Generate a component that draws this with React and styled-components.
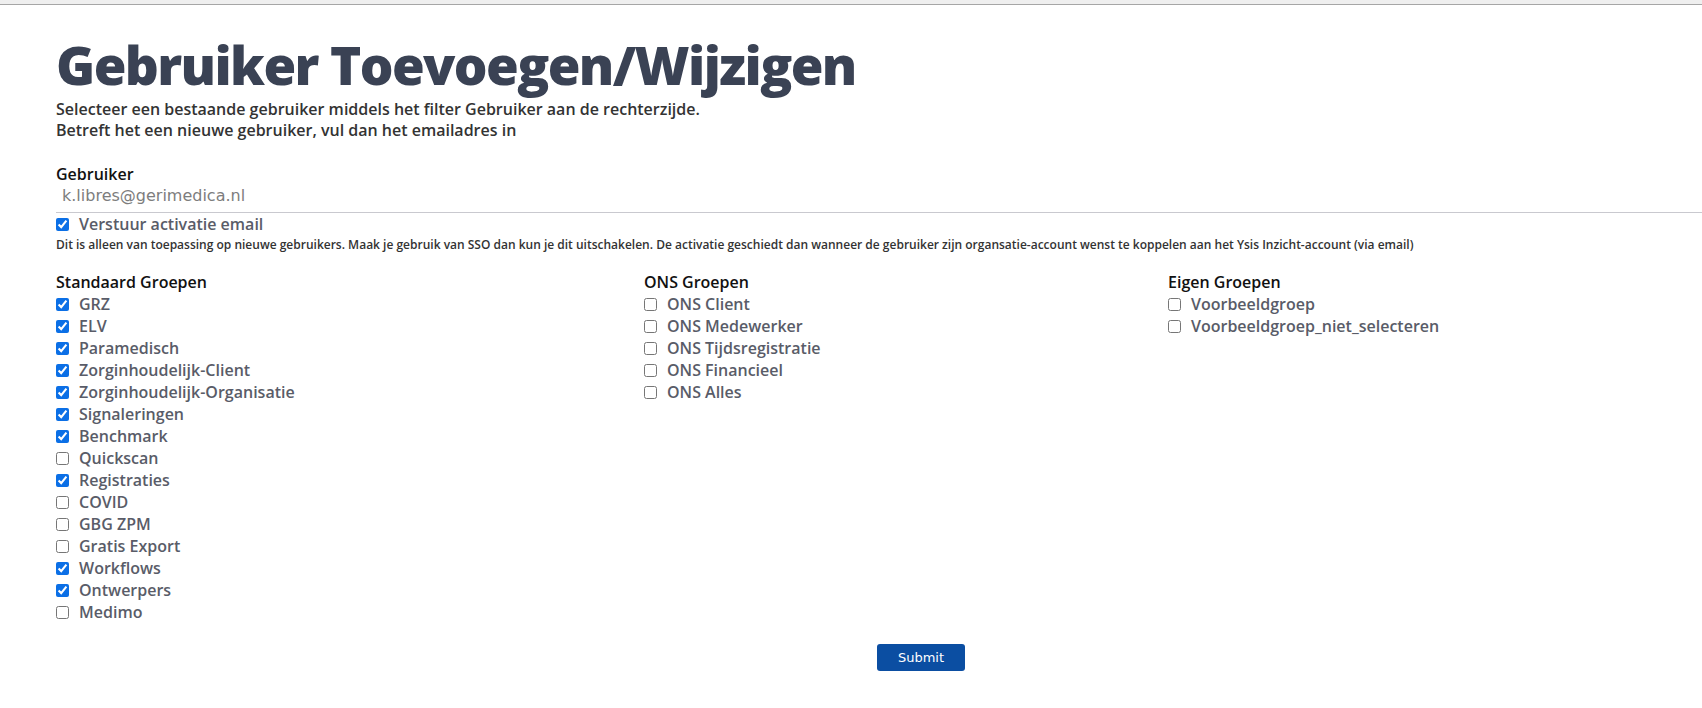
import styled, { createGlobalStyle } from "styled-components";

const GlobalStyle = createGlobalStyle`
  * { box-sizing: border-box; }
  body {
    margin: 0;
    background: #fff;
    font-family: "Open Sans", "Noto Sans", sans-serif;
  }
`;

const TopStrip = styled.div`
  height: 5px;
  background: #efefef;
  border-bottom: 1px solid #a6a6a6;
`;

const Page = styled.main`
  padding: 28px 0 40px 56px;
`;

const Title = styled.h1`
  margin: 0;
  font-size: 53px;
  line-height: 64px;
  font-weight: 800;
  letter-spacing: -1.6px;
  color: #3a4254;
`;

const Intro = styled.p`
  margin: 2px 0 0;
  font-size: 16px;
  line-height: 21px;
  font-weight: 600;
  color: #333;
`;

const Field = styled.div`
  margin-top: 22px;
  display: flex;
  flex-direction: column;
`;

const Label = styled.label`
  font-size: 16px;
  line-height: 22px;
  font-weight: 600;
  color: #111;
`;

const TextInput = styled.input`
  border: none;
  border-bottom: 1px solid #c9c9cf;
  padding: 0 6px 5px;
  font-family: "DejaVu Sans", "Open Sans", sans-serif;
  font-size: 16px;
  line-height: 22px;
  color: #7d7d7d;
  outline: none;
  background: transparent;
`;

const CheckRow = styled.label`
  display: flex;
  align-items: center;
  font-size: 16px;
  line-height: 22px;
  font-weight: 600;
  color: #595c68;
`;

const Box = styled.input`
  width: 13px;
  height: 13px;
  margin: 0 10px 0 0;
  accent-color: #0b6fe6;
`;

const Note = styled.p`
  margin: 1px 0 0;
  font-size: 12px;
  line-height: 18px;
  font-weight: 600;
  color: #333;
`;

const Columns = styled.div`
  margin-top: 17px;
  display: grid;
  grid-template-columns: 588px 524px 1fr;
`;

const Group = styled.section`
  display: flex;
  flex-direction: column;
`;

const GroupTitle = styled.h3`
  margin: 0;
  font-size: 16px;
  line-height: 22px;
  font-weight: 600;
  color: #111;
`;

const Footer = styled.div`
  margin-top: 21px;
  padding-left: 821px;
`;

const SubmitButton = styled.button`
  width: 88px;
  height: 27px;
  border: none;
  border-radius: 3px;
  background: #0b4ea2;
  color: #fff;
  font-family: "DejaVu Sans", "Open Sans", sans-serif;
  font-size: 13px;
  cursor: pointer;
`;

const groups = [
  {
    title: "Standaard Groepen",
    items: [
      ["GRZ", true],
      ["ELV", true],
      ["Paramedisch", true],
      ["Zorginhoudelijk-Client", true],
      ["Zorginhoudelijk-Organisatie", true],
      ["Signaleringen", true],
      ["Benchmark", true],
      ["Quickscan", false],
      ["Registraties", true],
      ["COVID", false],
      ["GBG ZPM", false],
      ["Gratis Export", false],
      ["Workflows", true],
      ["Ontwerpers", true],
      ["Medimo", false],
    ],
  },
  {
    title: "ONS Groepen",
    items: [
      ["ONS Client", false],
      ["ONS Medewerker", false],
      ["ONS Tijdsregistratie", false],
      ["ONS Financieel", false],
      ["ONS Alles", false],
    ],
  },
  {
    title: "Eigen Groepen",
    items: [
      ["Voorbeeldgroep", false],
      ["Voorbeeldgroep_niet_selecteren", false],
    ],
  },
];

export default function App() {
  return (
    <>
      <GlobalStyle />
      <TopStrip />
      <Page>
        <Title>Gebruiker Toevoegen/Wijzigen</Title>
        <Intro>
          Selecteer een bestaande gebruiker middels het filter Gebruiker aan de
          rechterzijde.
          <br />
          Betreft het een nieuwe gebruiker, vul dan het emailadres in
        </Intro>

        <Field>
          <Label htmlFor="user">Gebruiker</Label>
          <TextInput id="user" defaultValue="k.libres@gerimedica.nl" />
        </Field>

        <CheckRow>
          <Box type="checkbox" defaultChecked />
          Verstuur activatie email
        </CheckRow>
        <Note>
          Dit is alleen van toepassing op nieuwe gebruikers. Maak je gebruik van
          SSO dan kun je dit uitschakelen. De activatie geschiedt dan wanneer de
          gebruiker zijn organsatie-account wenst te koppelen aan het Ysis
          Inzicht-account (via email)
        </Note>

        <Columns>
          {groups.map((group) => (
            <Group key={group.title}>
              <GroupTitle>{group.title}</GroupTitle>
              {group.items.map(([name, checked]) => (
                <CheckRow key={name}>
                  <Box type="checkbox" defaultChecked={checked} />
                  {name}
                </CheckRow>
              ))}
            </Group>
          ))}
        </Columns>

        <Footer>
          <SubmitButton type="submit">Submit</SubmitButton>
        </Footer>
      </Page>
    </>
  );
}
